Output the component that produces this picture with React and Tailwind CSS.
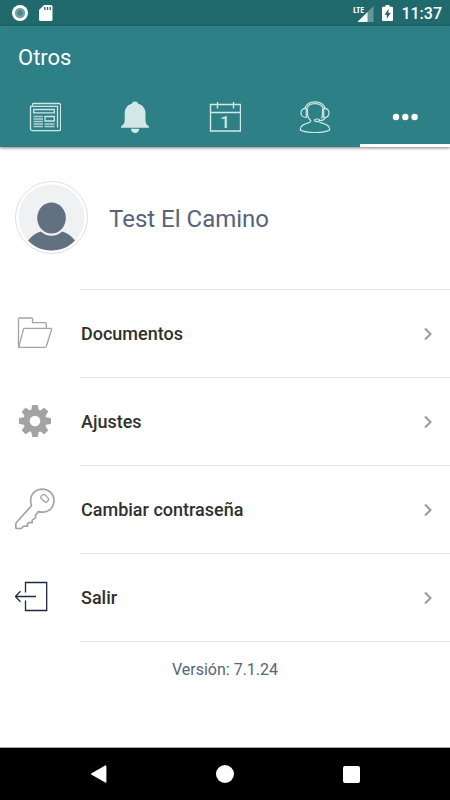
const TABS = [
  { label: "Noticias", icon: NewsIcon },
  { label: "Notificaciones", icon: BellIcon },
  { label: "Calendario", icon: CalendarIcon },
  { label: "Soporte", icon: SupportIcon },
  { label: "Otros", icon: DotsIcon, active: true },
];

const MENU = [
  { label: "Documentos", icon: FolderIcon },
  { label: "Ajustes", icon: GearIcon },
  { label: "Cambiar contraseña", icon: KeyIcon },
  { label: "Salir", icon: ExitIcon },
];

const GEAR_TEETH = [0, 45, 90, 135, 180, 225, 270, 315];

function NewsIcon() {
  return (
    <svg width="32" height="32" viewBox="0 0 32 32" fill="none" stroke="#cfe6e6">
      <path d="M3.500 4.500V3.500a1 1 0 0 1 1-1h25.600a1.500 1.500 0 0 1 1.500 1.500v23.700a2 2 0 0 1-2 2H3.500a2 2 0 0 1-2-2V5.300h27v21.200" strokeWidth="1.300" />
      <path d="M4.700 8.500h20.600v3.300H4.700z" strokeWidth="1.300" />
      <path d="M16 15.500h9.300v4.500H16z" strokeWidth="1.300" />
      <path d="M4.500 15.500h9.500M4.500 18h9.500M4.500 20.500h9.500M4.500 23h9.500M4.500 25.500h9.500M15.500 23h10M15.500 25.500h10" opacity="0.8" strokeWidth="1.500" />
    </svg>
  );
}

function BellIcon() {
  return (
    <svg width="32" height="32" viewBox="0 0 32 32" fill="#d3e7e7">
      <path d="M16 .5c1.600 0 2.800.9 3.100 2.300 4.600 1.300 7.400 4.700 7.400 9.500v7.200c0 3 1.300 4.600 3.500 5.900v1.300H2v-1.300c2.200-1.300 3.700-2.900 3.700-5.900v-7.200c0-4.800 2.600-8.200 7.200-9.500C13.200 1.400 14.400.5 16 .5z" />
      <path d="M12 27.700h8.200c0 2.400-1.700 4.200-4.100 4.200S12 30.100 12 27.700z" />
    </svg>
  );
}

function CalendarIcon() {
  return (
    <svg width="32" height="32" viewBox="0 0 32 32" fill="none" stroke="#d3e7e7">
      <path d="M1.500 3.500h30v26.500h-30zM1.500 11.500h30" strokeWidth="1.400" />
      <path d="M8.500 1v6.500M24.500 1v6.500" strokeWidth="1.400" />
      <text x="16" y="27" fontSize="17" textAnchor="middle" fill="#d3e7e7" stroke="none" className="font-[Roboto,sans-serif] font-medium">
        1
      </text>
    </svg>
  );
}

function SupportIcon() {
  return (
    <svg width="32" height="32" viewBox="0 0 32 32" fill="none" stroke="#cfe6e6" strokeWidth="1.200">
      <path d="M5.600 7.500C7.200 3.200 11 .8 16 .8s8.800 2.400 10.400 6.700" />
      <path d="M7.500 8.500C8.500 4.700 11.800 2.700 16 2.700s7.500 2 8.500 5.800" />
      <path d="M7.300 7.300v9.200c-3.300 0-5.300-2-5.300-4.600s2-4.600 5.300-4.600zM24.700 7.300v9.200c3.300 0 5.300-2 5.300-4.600s-2-4.600-5.300-4.600z" />
      <path d="M8.500 8v4.500c0 3 1.300 5.500 3.400 7.200-.2 1.300-1.300 2-3.200 2.500C4 23.300 1.200 25 1.200 29c3.500 1.800 8 2.500 14.800 2.500s11.300-.7 14.800-2.500c0-4-2.800-5.700-7.500-6.800-1.700-.4-2.700-.8-3-1.700M23.500 8v5c0 1.800-.4 3.200-1.200 4.500" />
      <path d="M26.500 16.300c-.8 2.300-3 3.300-6 3.200" />
      <ellipse cx="18" cy="19.300" rx="2.500" ry="1.300" />
    </svg>
  );
}

function DotsIcon() {
  return (
    <svg width="32" height="32" viewBox="0 0 32 32" fill="#ffffff">
      <circle cx="7" cy="16" r="3.200" />
      <circle cx="16.300" cy="16" r="3.200" />
      <circle cx="25.600" cy="16" r="3.200" />
    </svg>
  );
}

function FolderIcon() {
  return (
    <svg width="40" height="40" viewBox="0 0 40 40" fill="none" stroke="#a3a3a3" strokeWidth="1.300" strokeLinejoin="round">
      <path d="M3.500 34.500V6a1 1 0 0 1 1-1h12a1 1 0 0 1 1 1v3.700h12.800a1 1 0 0 1 1 1v4.600" />
      <path d="M9.400 15.300h26.200a1 1 0 0 1 1 1.300l-5.300 16.700a1.500 1.500 0 0 1-1.400 1H3.700l4.800-18.200a1 1 0 0 1 .9-.8z" />
    </svg>
  );
}

function GearIcon() {
  return (
    <svg width="40" height="40" viewBox="0 0 40 40" fill="#a3a3a3">
      {GEAR_TEETH.map((angle) => (
        <path key={angle} d="M17.700 4h4.600a.6.6 0 0 1 .6.500l1 5.500h-7.800l1-5.500a.6.6 0 0 1 .6-.5z" transform={`rotate(${angle} 20 20)`} />
      ))}
      <circle cx="20" cy="20" r="8.500" fill="none" stroke="#a3a3a3" strokeWidth="6.400" />
    </svg>
  );
}

function KeyIcon() {
  return (
    <svg width="42" height="42" viewBox="0 0 42 42" fill="none" stroke="#a3a3a3" strokeWidth="1.700" strokeLinejoin="round">
      <path d="M16.500 17.700C13.500 8.800 18.500 1.300 27.300 1.100 34 1.100 39 6.100 39 12.600c-.2 8.300-7.200 13.300-15.500 11l-3 3.600v2.700l-3.300 2.200v2.500h-3.500l-1.200 1v2.600H8.800c-1 .3-1.700 1.600-2.800 2.300H1.900c-.8 0-1.100-.5-1.100-1.200v-3.200c0-.8.3-1.300.8-1.900z" />
      <rect x="25.700" y="7.700" width="8" height="5.200" rx="2" transform="rotate(45 29.700 10.300)" strokeWidth="1.300" />
    </svg>
  );
}

function ExitIcon() {
  return (
    <svg width="40" height="40" viewBox="0 0 40 40" fill="none" stroke="#1f2547" strokeWidth="1.300">
      <path d="M10.500 15.500V5.500h21.200v28H10.500V23.500" />
      <path d="M21 19.500H.3M5.500 14.200L.3 19.500l5.200 5.200" />
    </svg>
  );
}

function Avatar() {
  return (
    <svg width="74" height="74" viewBox="0 0 74 74" className="shrink-0">
      <circle cx="37.500" cy="36.500" r="36" fill="#ffffff" stroke="#dcdfe2" />
      <circle cx="37.500" cy="36.500" r="33" fill="#eff1f3" />
      <path d="M14 59.500c3.400-4.500 7.300-7.200 12.800-9 3 2.800 6.600 4.200 10.700 4.200s7.700-1.400 10.700-4.200c5.500 1.800 9.400 4.500 12.800 9-6 6.500-14 10-23.500 10s-17.500-3.500-23.500-10z" fill="#62717f" />
      <ellipse cx="37.500" cy="37" rx="14.300" ry="15.500" fill="#62717f" />
    </svg>
  );
}

function StatusBar() {
  return (
    <div className="flex h-[26px] items-center justify-between bg-[#20696d] pr-2 pl-3 text-white">
      <div className="flex items-center gap-[11px]">
        <svg width="16" height="16" viewBox="0 0 16 16">
          <circle cx="8" cy="8" r="8" fill="#ffffff" />
          <circle cx="8" cy="8" r="5.200" fill="#72a3a5" />
          <circle cx="8" cy="8" r="2.800" fill="#4a8587" />
        </svg>
        <svg width="14" height="16" viewBox="0 0 14 16">
          <path d="M5 0h7a1.500 1.500 0 0 1 1.500 1.500v13A1.500 1.500 0 0 1 12 16H1.500A1.500 1.500 0 0 1 0 14.500V5z" fill="#ffffff" />
          <path d="M5.800 2v3M8.500 2v3M11.200 2v3" stroke="#20696d" strokeWidth="1.300" />
        </svg>
      </div>
      <div className="flex items-center gap-2">
        <svg width="21" height="18" viewBox="0 -2 21 18" className="overflow-visible">
          <path d="M20.500 0v16h-16z" fill="#63989b" />
          <path d="M14.500 6v10h-10z" fill="#ffffff" />
          <path d="M0 0h12v8H0z" fill="#20696d" />
          <text x="0" y="7" fontSize="9" fill="#ffffff" className="font-['Open_Sans_Condensed','Liberation_Sans_Narrow',sans-serif] font-bold">
            LTE
          </text>
        </svg>
        <svg width="11" height="16" viewBox="0 0 11 16">
          <path d="M3.500 0h4v1.700H10a1 1 0 0 1 1 1V15a1 1 0 0 1-1 1H1a1 1 0 0 1-1-1V2.700a1 1 0 0 1 1-1h2.500z" fill="#ffffff" />
          <path d="M6.500 4L2.500 9.700h2.300v4.100l3.900-5.700H6.500z" fill="#20696d" />
        </svg>
        <span className="pt-0.5 text-base leading-5 font-medium">11:37</span>
      </div>
    </div>
  );
}

function NavBar() {
  return (
    <nav className="mt-auto flex h-[53px] items-center justify-center gap-[94px] border-t border-[#a3a3a3] bg-black">
      <button type="button" aria-label="Atrás" className="flex w-8 justify-center">
        <svg width="18" height="18" viewBox="0 0 18 18" fill="#ffffff">
          <path d="M15.200.4a.8.8 0 0 1 1.200.7v15.800a.8.8 0 0 1-1.200.7L1.200 9.600a.8.8 0 0 1 0-1.200z" />
        </svg>
      </button>
      <button type="button" aria-label="Inicio" className="flex w-8 justify-center">
        <span className="size-[18px] rounded-full bg-white" />
      </button>
      <button type="button" aria-label="Recientes" className="flex w-8 justify-center">
        <span className="size-[17px] rounded-xs bg-white" />
      </button>
    </nav>
  );
}

export default function App() {
  return (
    <div className="flex min-h-screen flex-col bg-white font-[Roboto,sans-serif]">
      <StatusBar />

      <header className="bg-[#2e8087] shadow-[0_1px_3px_rgba(0,0,0,0.5)]">
        <h1 className="px-[18px] pt-[18px] pb-[15px] text-[22px] leading-7 text-white">Otros</h1>
        <nav className="grid h-[60px] grid-cols-5">
          {TABS.map(({ label, icon: Icon, active }) => (
            <a
              key={label}
              href="#"
              aria-label={label}
              className={`flex items-center justify-center border-t-3 border-b-3 border-t-transparent ${active ? "border-b-white" : "border-b-transparent"}`}
            >
              <Icon />
            </a>
          ))}
        </nav>
      </header>

      <main>
        <section className="flex h-[142px] items-center gap-[21px] px-[14px]">
          <Avatar />
          <h2 className="pt-0.5 text-[24px] leading-8 text-[#56637a]">Test El Camino</h2>
        </section>

        <ul>
          {MENU.map(({ label, icon: Icon }) => (
            <li key={label}>
              <a href="#" className="flex h-[88px] items-center pl-[15px]">
                <span className="w-[65px]">
                  <Icon />
                </span>
                <span className="flex h-full flex-1 items-center justify-between border-t border-[#e0e0e0] pr-[17px] pl-px">
                  <span className="text-[18px] leading-6 font-medium text-[#303030]">{label}</span>
                  <svg width="10" height="14" viewBox="0 0 10 14" fill="none" stroke="#999999" strokeWidth="2">
                    <path d="M2 1.500L7.500 7 2 12.500" />
                  </svg>
                </span>
              </a>
            </li>
          ))}
        </ul>
        <p className="ml-20 border-t border-[#e0e0e0] pt-[18px] text-[16px] leading-5 text-[#56637a]">
          <span className="-ml-20 block text-center">Versión: 7.1.24</span>
        </p>
      </main>

      <NavBar />
    </div>
  );
}
